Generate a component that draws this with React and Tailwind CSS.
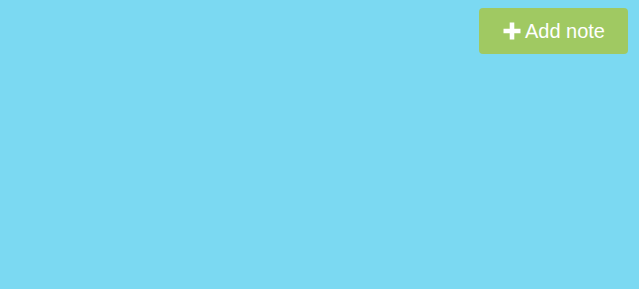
import React from 'react';

const PlusIcon = () => (
  <svg width="18" height="18" viewBox="0 0 18 18" className="shrink-0">
    <path d="M6.7 0.5h4.6v6.2h6.2v4.6h-6.2v6.2H6.7v-6.2H0.5V6.7h6.2z" fill="#ffffff" />
  </svg>
);

const App = () => {
  return (
    <div className="w-[639px] h-[289px] bg-[#7bd9f2] flex justify-end items-start pt-2 pr-[11px] font-['Liberation_Sans',Arial,sans-serif]">
      <button className="flex items-center gap-[4px] h-[46px] pl-[24px] pr-[23px] bg-[#a0c962] rounded-[4px] text-white text-[20px] leading-none">
        <PlusIcon />
        <span>Add note</span>
      </button>
    </div>
  );
};

export default App;
